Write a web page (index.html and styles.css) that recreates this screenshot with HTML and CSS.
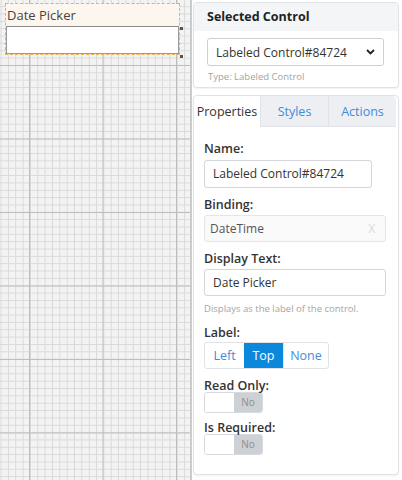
FILE: index.html
```html
<!DOCTYPE html>
<html lang="en">
<head>
  <meta charset="utf-8">
  <title>Form Designer</title>
  <link rel="stylesheet" href="styles.css">
</head>
<body>
  <div class="designer">
    <div class="canvas">
      <div class="ctl">
        <div class="ctl-label">Date Picker</div>
        <div class="ctl-input"></div>
        <span class="grip grip-mid"></span>
        <span class="grip grip-end"></span>
      </div>
    </div>
    <div class="side">
      <div class="card sel-card">
        <div class="card-head">Selected Control</div>
        <div class="select">
          <span>Labeled Control#84724</span>
          <svg width="9" height="6" viewBox="0 0 9 6"><path d="M1 1 L4.5 4.5 L8 1" fill="none" stroke="#222" stroke-width="1.8"/></svg>
        </div>
        <div class="type">Type: Labeled Control</div>
      </div>
      <div class="card props">
        <div class="tabs">
          <div class="tab active">Properties</div>
          <div class="tab">Styles</div>
          <div class="tab">Actions</div>
        </div>
        <div class="body">
          <div class="lbl first">Name:</div>
          <div class="input name">Labeled Control#84724</div>

          <div class="lbl">Binding:</div>
          <div class="input binding"><span>DateTime</span><span class="x">X</span></div>

          <div class="lbl">Display Text:</div>
          <div class="input">Date Picker</div>
          <div class="help">Displays as the label of the control.</div>

          <div class="lbl">Label:</div>
          <div class="btns">
            <div class="btn">Left</div>
            <div class="btn on">Top</div>
            <div class="btn">None</div>
          </div>

          <div class="lbl">Read Only:</div>
          <div class="toggle"><span class="knob"></span><span class="no">No</span></div>

          <div class="lbl after-toggle">Is Required:</div>
          <div class="toggle"><span class="knob"></span><span class="no">No</span></div>
        </div>
      </div>
    </div>
  </div>
</body>
</html>
```

FILE: styles.css
```css
html, body {
  margin: 0;
  padding: 0;
}
body {
  font-family: "Open Sans", "Noto Sans", sans-serif;
  color: #333;
  background: #fff;
}
.designer {
  display: flex;
  width: 402px;
  height: 480px;
  overflow: hidden;
}

/* canvas */
.canvas {
  width: 192px;
  height: 480px;
  border-right: 2px solid #c9cdd2;
  background-color: #f3f3f3;
  background-image:
    linear-gradient(to right, #bdbdbd 1px, transparent 1px),
    linear-gradient(to bottom, #bdbdbd 1px, transparent 1px),
    linear-gradient(to right, #d9d9d9 1px, transparent 1px),
    linear-gradient(to bottom, #d9d9d9 1px, transparent 1px);
  background-size: 73.5px 73.5px, 73.5px 73.5px, 7.35px 7.35px, 7.35px 7.35px;
  background-position: 29px 65px, 29px 65px, 0.6px 6.2px, 0.6px 6.2px;
  padding: 3px 0 0 5px;
  box-sizing: border-box;
}
.ctl {
  position: relative;
  width: 175px;
  border: 1px dashed #f0b04a;
  box-sizing: border-box;
}
.ctl-label {
  background: #fdf6ee;
  font-size: 13px;
  line-height: 22px;
  padding-left: 1px;
  color: #444;
}
.ctl-input {
  height: 26px;
  background: #fff;
  border: 1px solid #9a9a9a;
  border-top-color: #8a8a8a;
}
.grip {
  position: absolute;
  right: -4px;
  width: 3px;
  height: 3px;
  background: #555;
}
.grip-mid { top: 23px; }
.grip-end { bottom: -4px; }

/* side panel */
.side {
  flex: 1;
  padding: 2px 3px 0 1px;
  display: flex;
  flex-direction: column;
  gap: 7px;
}
.card {
  border: 1px solid #dfe2e6;
  border-radius: 4px;
  background: #fff;
  box-shadow: 0 1px 2px rgba(0,0,0,0.06);
}
.sel-card {
  height: 86px;
  box-sizing: border-box;
}
.card-head {
  background: #f4f5f7;
  font-size: 12.5px;
  font-weight: 700;
  line-height: 28px;
  padding-left: 13px;
  color: #222;
  border-radius: 4px 4px 0 0;
}
.select {
  margin: 7px 14px 0 13px;
  height: 28px;
  border: 1px solid #ccd0d4;
  border-radius: 3px;
  box-sizing: border-box;
  display: flex;
  align-items: center;
  justify-content: space-between;
  padding: 0 8px 0 8px;
  font-size: 12px;
  color: #333;
}
.type {
  margin: 4px 0 0 14px;
  font-size: 9.5px;
  color: #a3a3a3;
}

.props {
  flex: 1;
  margin-bottom: 5px;
}
.tabs {
  display: flex;
  height: 31px;
}
.tab {
  width: 68px;
  font-size: 12.5px;
  line-height: 31px;
  text-align: center;
  background: #edeff2;
  color: #3d8ddb;
  border-bottom: 1px solid #dfe2e6;
  border-left: 1px solid #dfe2e6;
  box-sizing: border-box;
}
.tab.active {
  width: 66px;
  background: #fff;
  color: #333;
  border: 0;
  border-radius: 4px 0 0 0;
}
.tab:last-child {
  border-radius: 0 4px 0 0;
}
.body {
  padding: 13px 0 0 10px;
}
.lbl {
  font-size: 12.5px;
  font-weight: 600;
  line-height: 18px;
  color: #333;
  margin-top: 8px;
}
.lbl.first { margin-top: 0; }
.lbl.after-toggle { margin-top: 6px; }
.input {
  margin-top: 1px;
  width: 182px;
  height: 27px;
  box-sizing: border-box;
  border: 1px solid #d3d6da;
  border-radius: 3px;
  font-size: 12px;
  line-height: 25px;
  padding-left: 8px;
  color: #333;
}
.input.name {
  width: 168px;
  height: 28px;
  margin-top: 2px;
}
.input.binding {
  background: #fafafa;
  border-color: #e3e5e8;
  color: #555;
  padding-left: 5px;
  display: flex;
  justify-content: space-between;
}
.binding .x {
  color: #c8c8c8;
  font-weight: 300;
  font-size: 12px;
  padding-right: 10px;
}
.help {
  font-size: 9.5px;
  color: #a5a5a5;
  line-height: 14px;
  margin-top: 6px;
}
.btns {
  display: flex;
  width: 125px;
  height: 27px;
  border: 1px solid #dfe2e6;
  border-radius: 3px;
  box-sizing: border-box;
  overflow: hidden;
}
.btn {
  font-size: 12.5px;
  line-height: 25px;
  text-align: center;
  color: #3d8ddb;
  width: 39px;
}
.btn:last-child {
  flex: 1;
  border-left: 1px solid #dfe2e6;
}
.btn.on {
  background: #0b87dc;
  color: #fff;
}
.toggle {
  display: flex;
  width: 59px;
  height: 21px;
  margin-top: -3px;
  border: 1px solid #d6d9dd;
  border-radius: 3px;
  box-sizing: border-box;
  overflow: hidden;
}
.knob {
  width: 29px;
  background: #fff;
}
.no {
  flex: 1;
  background: #cdd0d4;
  color: #8c8f93;
  font-size: 10px;
  line-height: 19px;
  text-align: center;
}
```
